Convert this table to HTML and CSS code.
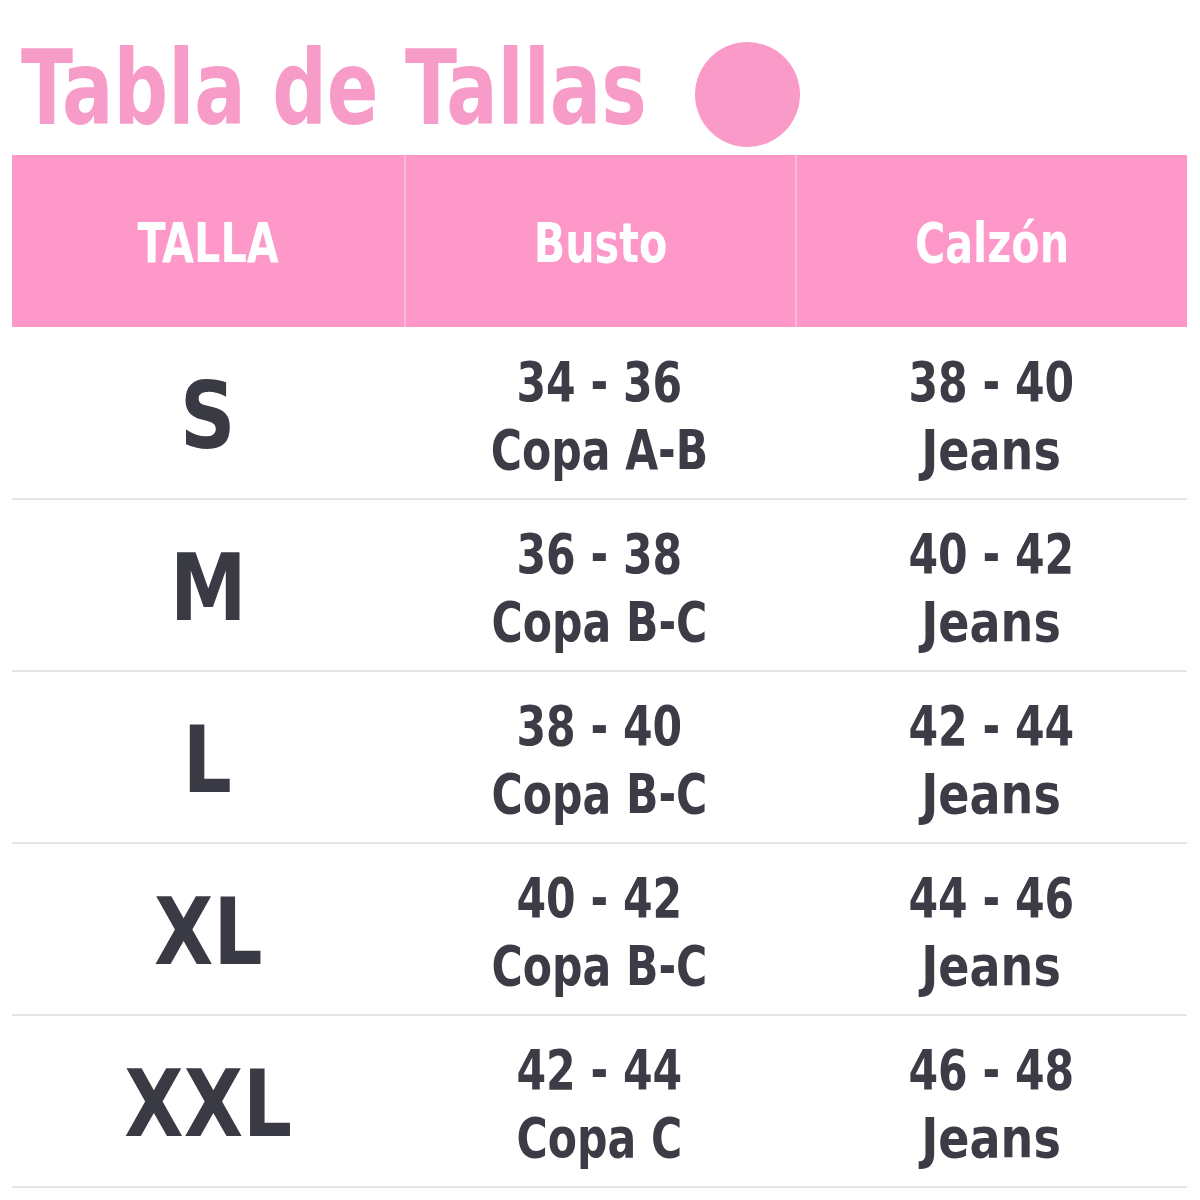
FILE: index.html
```html
<!DOCTYPE html>
<html lang="es">
<head>
<meta charset="utf-8">
<title>Tabla de Tallas</title>
<link rel="stylesheet" href="styles.css">
</head>
<body>
<div class="page">
  <div class="title-row">
    <h1 class="title"><span class="title-text">Tabla de Tallas</span></h1>
    <span class="dot"></span>
  </div>
  <div class="table">
    <div class="head">
      <div class="hcell"><span class="txt">TALLA</span></div>
      <div class="hcell"><span class="txt">Busto</span></div>
      <div class="hcell"><span class="txt">Calzón</span></div>
    </div>
    <div class="body">
      <div class="row">
        <div class="size"><span class="txt">S</span></div>
        <div class="cell"><span class="txt">34 - 36</span><span class="txt">Copa A-B</span></div>
        <div class="cell"><span class="txt">38 - 40</span><span class="txt wide">Jeans</span></div>
      </div>
      <div class="row">
        <div class="size"><span class="txt">M</span></div>
        <div class="cell"><span class="txt">36 - 38</span><span class="txt">Copa B-C</span></div>
        <div class="cell"><span class="txt">40 - 42</span><span class="txt wide">Jeans</span></div>
      </div>
      <div class="row">
        <div class="size"><span class="txt">L</span></div>
        <div class="cell"><span class="txt">38 - 40</span><span class="txt">Copa B-C</span></div>
        <div class="cell"><span class="txt">42 - 44</span><span class="txt wide">Jeans</span></div>
      </div>
      <div class="row">
        <div class="size"><span class="txt">XL</span></div>
        <div class="cell"><span class="txt">40 - 42</span><span class="txt">Copa B-C</span></div>
        <div class="cell"><span class="txt">44 - 46</span><span class="txt wide">Jeans</span></div>
      </div>
      <div class="row">
        <div class="size"><span class="txt">XXL</span></div>
        <div class="cell"><span class="txt">42 - 44</span><span class="txt">Copa C</span></div>
        <div class="cell"><span class="txt">46 - 48</span><span class="txt wide">Jeans</span></div>
      </div>
    </div>
  </div>
</div>
</body>
</html>
```

FILE: styles.css
```css
html, body {
  margin: 0;
  padding: 0;
  background: #ffffff;
}

body {
  font-family: "DejaVu Sans Condensed", "DejaVu Sans", sans-serif;
  width: 1200px;
  height: 1200px;
  overflow: hidden;
}

.page {
  padding: 0 13px 0 12px;
}

.txt {
  display: inline-block;
  white-space: nowrap;
}

.title-row {
  display: flex;
  align-items: flex-start;
  height: 155px;
  padding-left: 9px;
}

.title {
  margin: 36px 0 0 0;
  width: 628px;
  font-size: 104px;
  line-height: 104px;
  font-weight: 700;
  color: #f79bc8;
  white-space: nowrap;
}

.title-text {
  display: inline-block;
  transform: scaleX(0.815);
  transform-origin: left center;
}

.dot {
  display: block;
  width: 105px;
  height: 105px;
  border-radius: 50%;
  background: #fa9ac8;
  margin: 42px 0 0 46px;
  flex: none;
}

.head {
  display: grid;
  grid-template-columns: repeat(3, 1fr);
  height: 172px;
  background: #fd98c8;
}

.hcell {
  display: flex;
  align-items: center;
  justify-content: center;
  color: #ffffff;
  font-size: 56px;
  font-weight: 700;
  padding-top: 2px;
}

.hcell .txt {
  transform: scaleX(0.82);
}

.hcell + .hcell {
  border-left: 2px solid #fbb9d8;
}

.body {
  padding-top: 1px;
}

.row {
  display: grid;
  grid-template-columns: repeat(3, 1fr);
  height: 170px;
  border-bottom: 2px solid #e6e5ea;
}

.size {
  display: flex;
  align-items: center;
  justify-content: center;
  font-size: 92px;
  font-weight: 700;
  color: #3a3a44;
  padding-top: 6px;
}

.size .txt {
  transform: scaleX(0.93);
}

.cell {
  display: flex;
  flex-direction: column;
  align-items: center;
  justify-content: center;
  font-size: 55px;
  line-height: 68px;
  font-weight: 700;
  color: #3c3c46;
  padding-top: 6px;
}

.cell .txt {
  transform: scaleX(0.86);
}

.cell .txt.wide {
  transform: scaleX(0.93);
}
```
